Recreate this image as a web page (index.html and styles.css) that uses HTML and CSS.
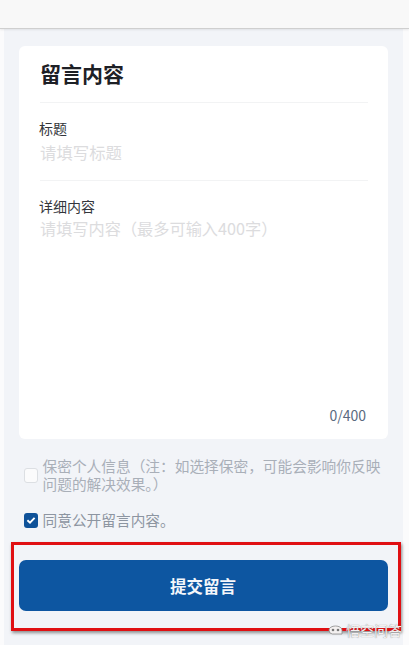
FILE: index.html
```html
<!DOCTYPE html>
<html lang="zh-CN">
<head>
<meta charset="utf-8">
<title>留言内容</title>
<link rel="stylesheet" href="styles.css">
</head>
<body>
<header class="topbar"></header>
<main class="page">
  <section class="card">
    <h1 class="card-title">留言内容</h1>
    <div class="field field-title">
      <div class="label">标题</div>
      <div class="placeholder">请填写标题</div>
    </div>
    <div class="field field-body">
      <div class="label">详细内容</div>
      <div class="placeholder">请填写内容（最多可输入400字）</div>
      <div class="counter">0/400</div>
    </div>
  </section>
  <div class="check check-private">
    <span class="box"></span>
    <span class="check-text">保密个人信息（注：如选择保密，可能会影响你反映问题的解决效果。）</span>
  </div>
  <div class="check check-public">
    <span class="box box-on">
      <svg viewBox="0 0 14 14" width="14" height="14"><path d="M3.4 7.2 6 9.6 10.6 4.8" fill="none" stroke="#fff" stroke-width="1.9"/></svg>
    </span>
    <span class="check-text">同意公开留言内容。</span>
  </div>
  <button class="submit" type="button">提交留言</button>
</main>
<div class="highlight"></div>
<div class="watermark">
  <svg class="watermark-icon" viewBox="0 0 15 10" width="15" height="10"><path d="M1 5a6.500 4 0 0 1 13 0v4H4.500A3.500 4 0 0 1 1 5Z" fill="#f3f0f0" stroke="#8a8a8a" stroke-width=".8"/><circle cx="5" cy="5" r="1.300" fill="#777"/><circle cx="10" cy="5" r="1.300" fill="#777"/></svg>
  <span>悟空问答</span>
</div>
</body>
</html>
```
FILE: styles.css
```css
* { box-sizing: border-box; }
html, body { margin: 0; height: 100%; }
body {
  position: relative;
  width: 409px;
  height: 645px;
  overflow: hidden;
  background: #fbfbfc;
  font-family: "Noto Sans CJK SC", "Noto Sans", sans-serif;
}
.topbar {
  position: relative;
  height: 29px;
  background: #f8f8f8;
  border-bottom: 1px solid #cfcfcf;
  box-shadow: 0 1px 2px rgba(0, 0, 0, .08);
}
.page {
  height: 616px;
  margin: 0 6px 0 4px;
  padding: 17px 15px 0 14.500px;
  background: #f2f4f8;
}
.card {
  width: 369px;
  height: 393px;
  padding: 0 20px 0 21.500px;
  background: #fff;
  border-radius: 6px;
}
.card-title {
  height: 57px;
  margin: 0;
  padding-top: 10px;
  font-size: 21px;
  line-height: 34px;
  font-weight: 700;
  color: #1d2026;
  border-bottom: 1px solid #f2f3f4;
}
.field { border-bottom: 1px solid #f2f3f4; }
.field-title { height: 78px; padding-top: 15px; }
.field-body { position: relative; height: 257px; padding-top: 15px; border-bottom: 0; }
.label {
  margin-left: -1px;
  font-size: 14px;
  line-height: 20px;
  color: #33363b;
}
.placeholder {
  font-size: 16.400px;
  line-height: 24px;
  margin-top: 2px;
  color: #dcdcde;
}
.field-body .placeholder { font-size: 16.200px; margin-top: 0; }
.counter {
  position: absolute;
  right: 1.500px;
  bottom: 13px;
  font-size: 14px;
  line-height: 20px;
  color: #5a6a80;
}
.check {
  display: flex;
  align-items: center;
  gap: 5px;
  margin-left: 5px;
  font-size: 14.700px;
  line-height: 18px;
  color: #a9afb8;
}
.check-private { margin-top: 18px; }
.check-public { margin-top: 18px; color: #8d95a1; }
.box {
  flex: none;
  width: 14px;
  height: 15px;
  background: #fbfbfc;
  border: 1px solid #dcdfe3;
  border-radius: 3px;
}
.box-on {
  display: flex;
  align-items: center;
  justify-content: center;
  background: #0f5299;
  border: 0;
}
.submit {
  display: block;
  width: 369px;
  height: 51px;
  margin-top: 31px;
  padding: 0;
  border: 0;
  border-radius: 7px;
  background: #0d56a1;
  color: #f4f7fb;
  font-family: inherit;
  font-size: 16.500px;
  font-weight: 700;
}
.highlight {
  position: absolute;
  left: 11px;
  top: 542px;
  width: 390px;
  height: 89px;
  border: 3px solid #e00f12;
  box-shadow: 1px 2px 3px rgba(60, 60, 60, .55);
}
.watermark {
  position: absolute;
  right: 7px;
  top: 621px;
  display: flex;
  align-items: center;
  gap: 3px;
  font-size: 14px;
  line-height: 18px;
  color: #f3f0f0;
  text-shadow: 0 0 1px #777;
}
.watermark-icon { flex: none; }
```
